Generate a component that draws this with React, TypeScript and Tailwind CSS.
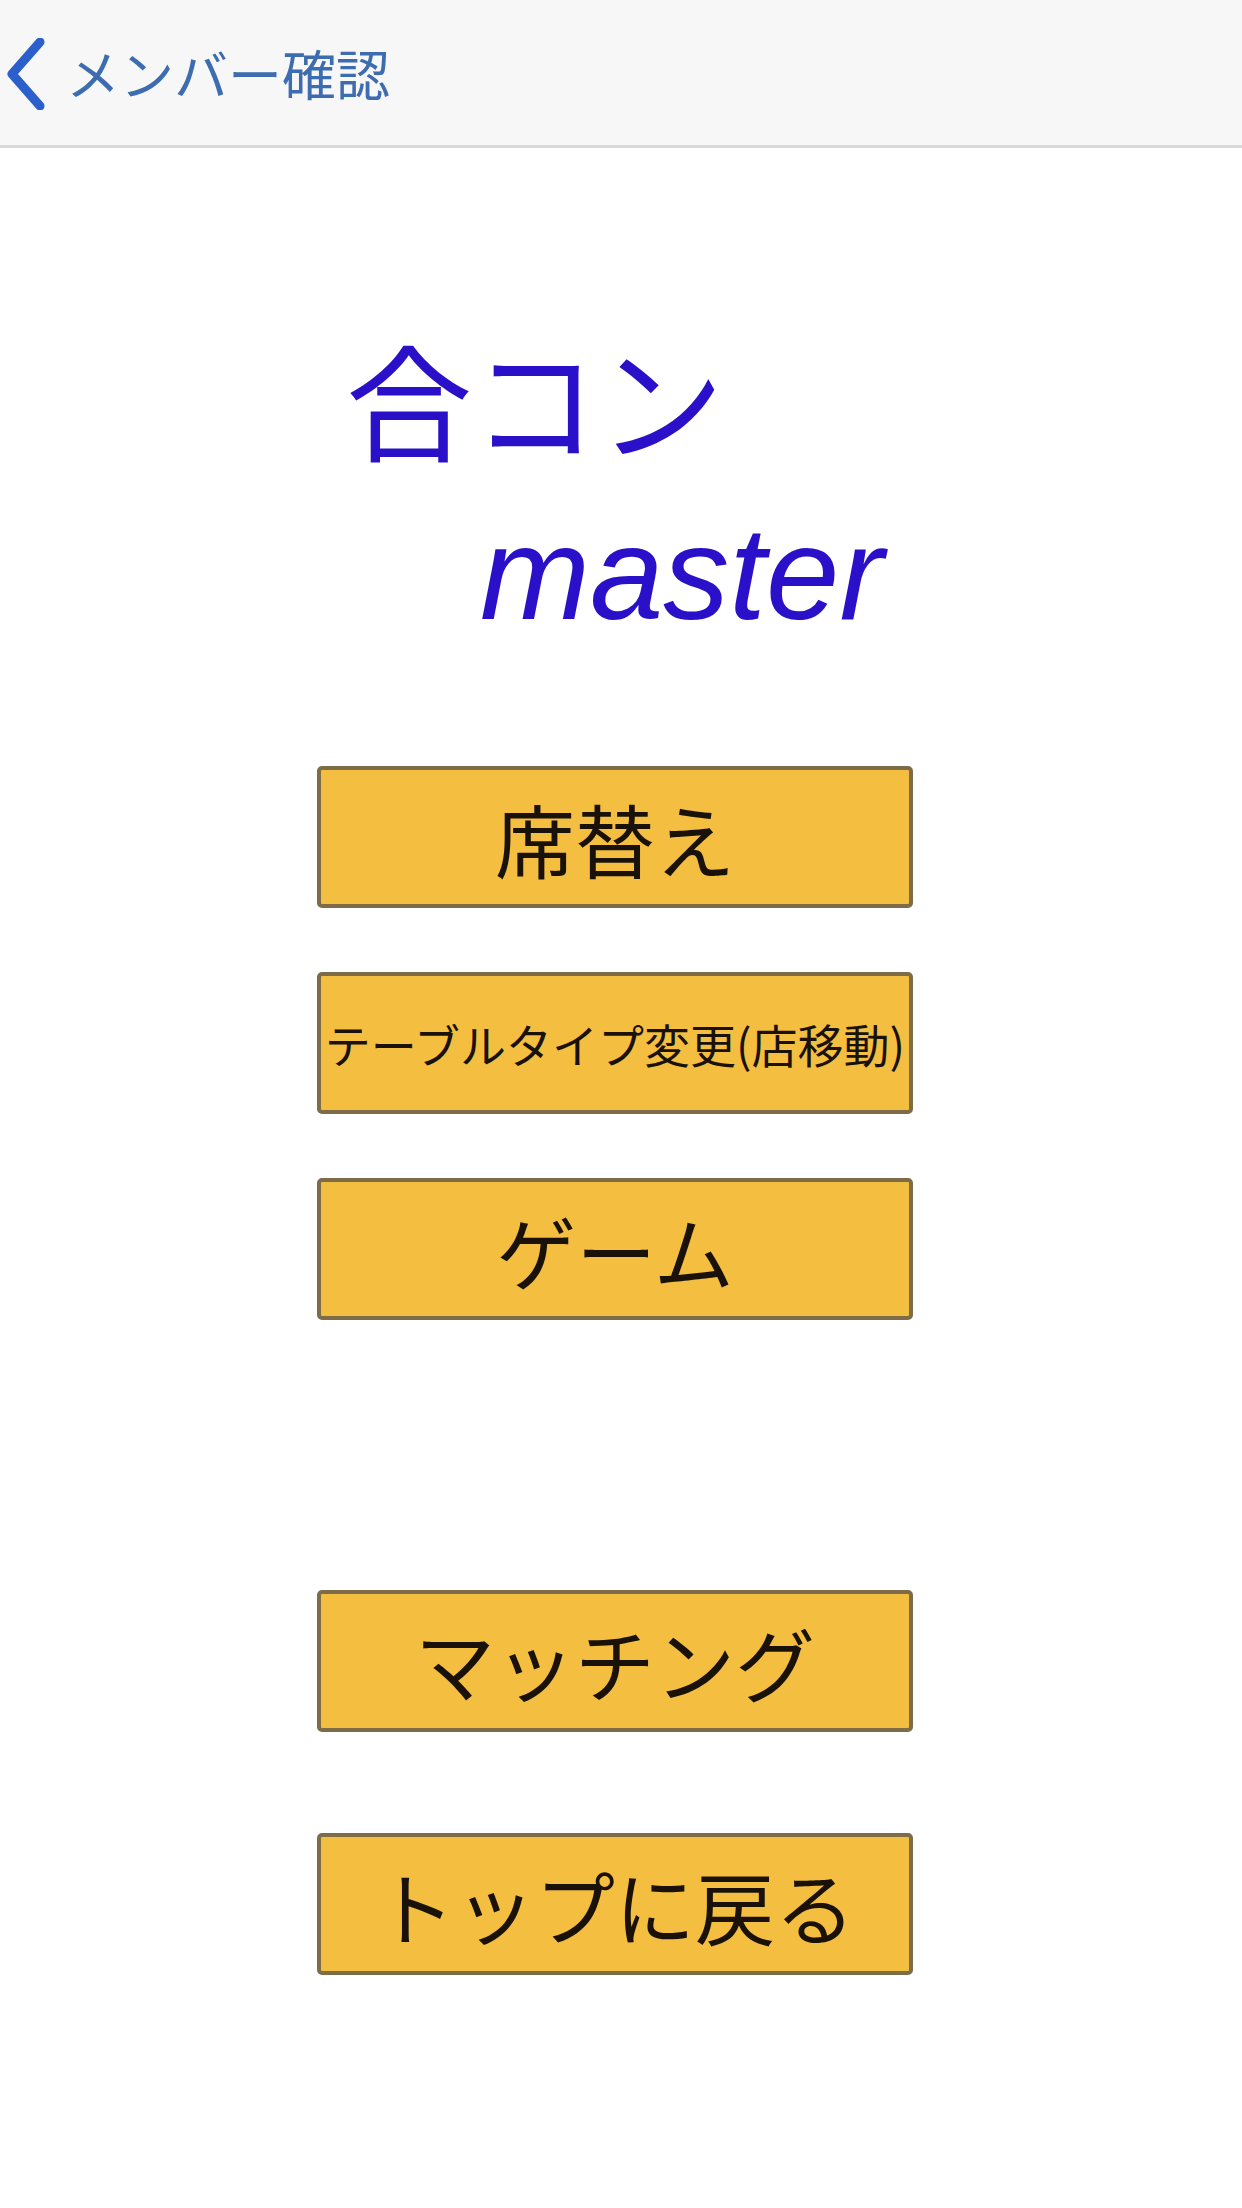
import React from "react";

const jp = { fontFamily: '"Noto Sans CJK JP", "Noto Sans", sans-serif' };

function Btn({ label, small }: { label: string; small?: boolean }) {
  return (
    <button
      className={
        "w-[596px] h-[142px] flex items-center justify-center bg-[#f4bf41] border-[4px] border-[#7d6c48] rounded-[5px] text-[#1a1208] leading-none whitespace-nowrap overflow-hidden " +
        (small ? "text-[46px]" : "text-[80px]")
      }
      style={jp}
    >
      {label}
    </button>
  );
}

export default function App() {
  return (
    <div className="w-[1242px] h-[2208px] bg-white flex flex-col" style={jp}>
      <div className="h-[148px] bg-[#f7f7f7] border-b-[3px] border-[#d9d9d9] flex items-center pl-[4px] shrink-0">
        <svg width="44" height="72" viewBox="0 0 44 72" className="mt-[2px]">
          <path d="M36 4 L8 36 L36 68" fill="none" stroke="#2b5fcc" strokeWidth="9" strokeLinecap="round" strokeLinejoin="round" />
        </svg>
        <span className="ml-[18px] text-[54px] leading-none text-[#3d6cb0]" style={jp}>
          メンバー確認
        </span>
      </div>

      <div className="flex flex-col items-center pr-[12px]">
        <div className="w-[600px] mt-[186px] flex flex-col">
          <div className="ml-[31px] text-[126px] leading-none text-[#2a10c8]" style={jp}>
            合コン
          </div>
          <div
            className="ml-[165px] mt-[48px] text-[132px] leading-none italic text-[#2a10c8]"
            style={{ fontFamily: '"Liberation Sans", Arial, sans-serif' }}
          >
            master
          </div>
        </div>

        <div className="mt-[126px] flex flex-col items-center">
          <Btn label="席替え" />
          <div className="h-[64px]" />
          <Btn label="テーブルタイプ変更(店移動)" small />
          <div className="h-[64px]" />
          <Btn label="ゲーム" />
          <div className="h-[270px]" />
          <Btn label="マッチング" />
          <div className="h-[101px]" />
          <Btn label="トップに戻る" />
        </div>
      </div>
    </div>
  );
}
